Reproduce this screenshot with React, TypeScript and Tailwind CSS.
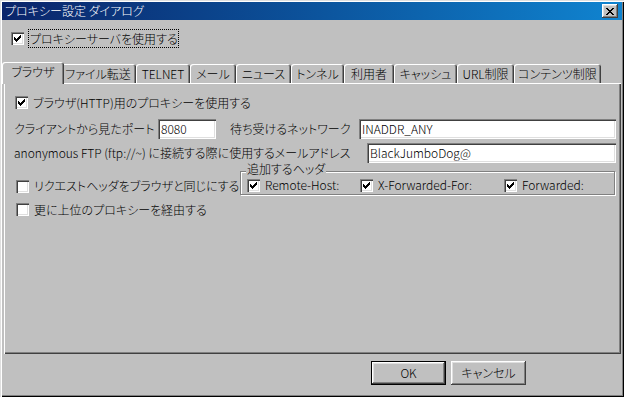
import React from "react";

const CHECK = ["......X", ".....XX", "X...XXX", "XX.XXX.", "XXXXX..", ".XXX...", "..X...."];
const CROSS = ["XX....XX", ".XX..XX.", "..XXXX..", "...XX...", "..XXXX..", ".XX..XX.", "XX....XX"];

const Pixels = ({ rows }: { rows: string[] }) => (
  <svg width={rows[0].length} height={rows.length} shapeRendering="crispEdges">
    {rows.map((r, y) =>
      r.split("").map((c, x) => (c === "X" ? <rect key={`${x}-${y}`} x={x} y={y} width={1} height={1} fill="#000" /> : null))
    )}
  </svg>
);

const sunken = "shadow-[inset_1px_1px_#808080,inset_2px_2px_#404040,inset_-1px_-1px_#fff,inset_-2px_-2px_#dfdfdf]";
const raised = "shadow-[inset_-1px_-1px_#404040,inset_1px_1px_#fff,inset_-2px_-2px_#808080,inset_2px_2px_#dfdfdf]";

const Check = ({ checked }: { checked?: boolean }) => (
  <div className={`w-[13px] h-[13px] shrink-0 bg-white flex items-center justify-center ${sunken}`}>
    {checked && <Pixels rows={CHECK} />}
  </div>
);

const TextBox = ({ value, w }: { value: string; w: string }) => (
  <div className={`${w} h-[20px] bg-white pl-[3px] flex items-center text-[12px] ${sunken}`}>{value}</div>
);

const tabs = [
  { label: "ブラウザ", w: "w-[62px]" },
  { label: "ファイル転送", w: "w-[76px]" },
  { label: "TELNET", w: "w-[54px]" },
  { label: "メール", w: "w-[46px]" },
  { label: "ニュース", w: "w-[55px]" },
  { label: "トンネル", w: "w-[53px]" },
  { label: "利用者", w: "w-[50px]" },
  { label: "キャッシュ", w: "w-[63px]" },
  { label: "URL制限", w: "w-[57px]" },
  { label: "コンテンツ制限", w: "w-[87px]" },
];

export default function App() {
  return (
    <div className="w-[624px] h-[397px] bg-[#c0c0c0] flex flex-col font-['Noto_Sans_CJK_JP','Noto_Sans',sans-serif] font-light [font-feature-settings:'palt'] text-black text-[12px] leading-[14px] shadow-[inset_1px_1px_#dfdfdf,inset_2px_2px_#fff,inset_-1px_-1px_#000,inset_-2px_-2px_#808080]">
      {/* title bar */}
      <div className="mx-[2px] mt-[2px] h-[18px] bg-gradient-to-r from-[#0a246a] to-[#1084d0] flex items-center justify-between pl-[3px] pr-[4px]">
        <span className="text-white text-[12px]">プロキシー設定 ダイアログ</span>
        <div className={`w-[16px] h-[14px] bg-[#c0c0c0] flex items-center justify-center ${raised}`}>
          <Pixels rows={CROSS} />
        </div>
      </div>

      {/* top checkbox */}
      <div className="mt-[9px] h-[19px] flex items-center pl-[11px]">
        <Check checked />
        <div className="ml-[4px] h-[19px] w-[151px] border border-dotted border-black flex items-center pl-[1px]">
          プロキシーサーバを使用する
        </div>
      </div>

      {/* tabs */}
      <div className="mt-[14px] h-[21px] flex items-end pl-[4px]">
        {tabs.map((t, i) =>
          i === 0 ? (
            <div
              key={t.label}
              className={`${t.w} h-[22px] -mx-[2px] -mb-px relative z-10 bg-[#c0c0c0] rounded-t-[3px] flex items-center justify-center pb-[2px] shadow-[inset_1px_1px_#fff,inset_-1px_0_#404040,inset_-2px_0_#808080]`}
            >
              {t.label}
            </div>
          ) : (
            <div
              key={t.label}
              className={`${t.w} ${i === 1 ? "ml-[-2px]" : ""} h-[19px] rounded-t-[3px] flex items-center justify-center shadow-[inset_1px_1px_#fff,inset_-1px_0_#404040,inset_-2px_0_#808080]`}
            >
              {t.label}
            </div>
          )
        )}
      </div>

      {/* panel */}
      <div className="ml-[4px] w-[617px] h-[271px] flex flex-col shadow-[inset_1px_1px_#fff,inset_-1px_-1px_#404040,inset_-2px_-2px_#808080]">
        <div className="mt-[13px] pl-[11px] flex items-center h-[13px]">
          <Check checked />
          <span className="ml-[5px]">ブラウザ(HTTP)用のプロキシーを使用する</span>
        </div>

        <div className="mt-[10px] pl-[10px] flex items-center h-[20px]">
          <span className="w-[144px]">クライアントから見たポート</span>
          <TextBox value="8080" w="w-[58px]" />
          <span className="ml-[14px] w-[129px]">待ち受けるネットワーク</span>
          <TextBox value="INADDR_ANY" w="w-[257px]" />
        </div>

        <div className="mt-[4px] pl-[10px] flex items-center h-[20px]">
          <span className="w-[353px] whitespace-nowrap">anonymous FTP (ftp://~) に接続する際に使用するメールアドレス</span>
          <TextBox value="BlackJumboDog@" w="w-[249px]" />
        </div>

        <div className="mt-[8px] flex items-start h-[25px]">
          <div className="w-[236px] pl-[12px] pt-[8px] flex items-center">
            <Check />
            <span className="ml-[5px] whitespace-nowrap">リクエストヘッダをブラウザと同じにする</span>
          </div>
          <div className="relative w-[375px] h-[24px] border border-[#808080] shadow-[inset_1px_1px_#fff,1px_1px_#fff] flex items-start pt-[6px] pl-[6px]">
            <span className="absolute left-[5px] -top-[9px] bg-[#c0c0c0] px-[1px] leading-[12px]">追加するヘッダ</span>
            <div className="w-[113px] flex items-center">
              <Check checked />
              <span className="ml-[5px]">Remote-Host:</span>
            </div>
            <div className="w-[144px] flex items-center">
              <Check checked />
              <span className="ml-[5px]">X-Forwarded-For:</span>
            </div>
            <div className="flex items-center">
              <Check checked />
              <span className="ml-[5px]">Forwarded:</span>
            </div>
          </div>
        </div>

        <div className="mt-[7px] pl-[12px] flex items-center h-[13px]">
          <Check />
          <span className="ml-[5px]">更に上位のプロキシーを経由する</span>
        </div>
      </div>

      {/* buttons */}
      <div className="mt-[7px] flex pl-[371px] gap-[5px]">
        <div className="w-[75px] h-[24px] border border-black">
          <div className={`w-full h-full flex items-center justify-center ${raised}`}>OK</div>
        </div>
        <div className={`w-[75px] h-[24px] flex items-center justify-center ${raised}`}>キャンセル</div>
      </div>
    </div>
  );
}
